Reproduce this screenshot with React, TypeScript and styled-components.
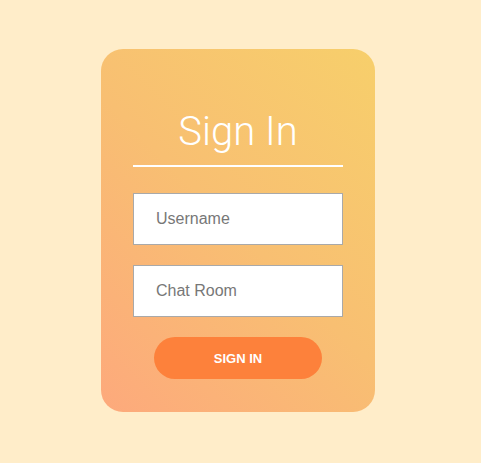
import React from "react";
import styled, { createGlobalStyle } from "styled-components";

const Global = createGlobalStyle`
  html, body { margin: 0; padding: 0; background: #ffedc9; }
  body { font-family: "Liberation Sans", Arial, sans-serif; }
`;

const Page = styled.div`
  width: 481px;
  height: 463px;
  box-sizing: border-box;
  padding: 49px 0 0 101px;
`;

const Card = styled.form`
  width: 274px;
  height: 363px;
  box-sizing: border-box;
  border-radius: 22px;
  background: linear-gradient(45deg, #fda97c 0%, #f8bf72 50%, #f7cf6b 100%);
  display: flex;
  flex-direction: column;
  align-items: center;
  padding-top: 58px;
`;

const Title = styled.h1`
  margin: 0;
  font-family: Roboto, "Liberation Sans", sans-serif;
  font-weight: 300;
  font-size: 40px;
  line-height: 50px;
  color: #ffffff;
  text-align: center;
`;

const Rule = styled.div`
  width: 210px;
  height: 2px;
  background: #ffffff;
  margin-top: 8px;
  margin-bottom: 26px;
`;

const Field = styled.input`
  width: 210px;
  height: 52px;
  box-sizing: border-box;
  border: 1px solid #a9a9a9;
  background: #ffffff;
  padding: 0 0 0 22px;
  margin-bottom: 20px;
  font-family: "Liberation Sans", Arial, sans-serif;
  font-size: 16px;
  color: #333;
  outline: none;
  &::placeholder { color: #777777; }
`;

const Button = styled.button`
  margin-top: 0;
  width: 168px;
  height: 42px;
  border: none;
  border-radius: 21px;
  background: #fd813b;
  color: #ffffff;
  font-family: "Liberation Sans", Arial, sans-serif;
  font-weight: 700;
  font-size: 13px;
  cursor: pointer;
`;

export default function App() {
  return (
    <>
      <Global />
      <Page>
        <Card onSubmit={(e) => e.preventDefault()}>
          <Title>Sign In</Title>
          <Rule />
          <Field placeholder="Username" />
          <Field placeholder="Chat Room" />
          <Button type="submit">SIGN IN</Button>
        </Card>
      </Page>
    </>
  );
}
